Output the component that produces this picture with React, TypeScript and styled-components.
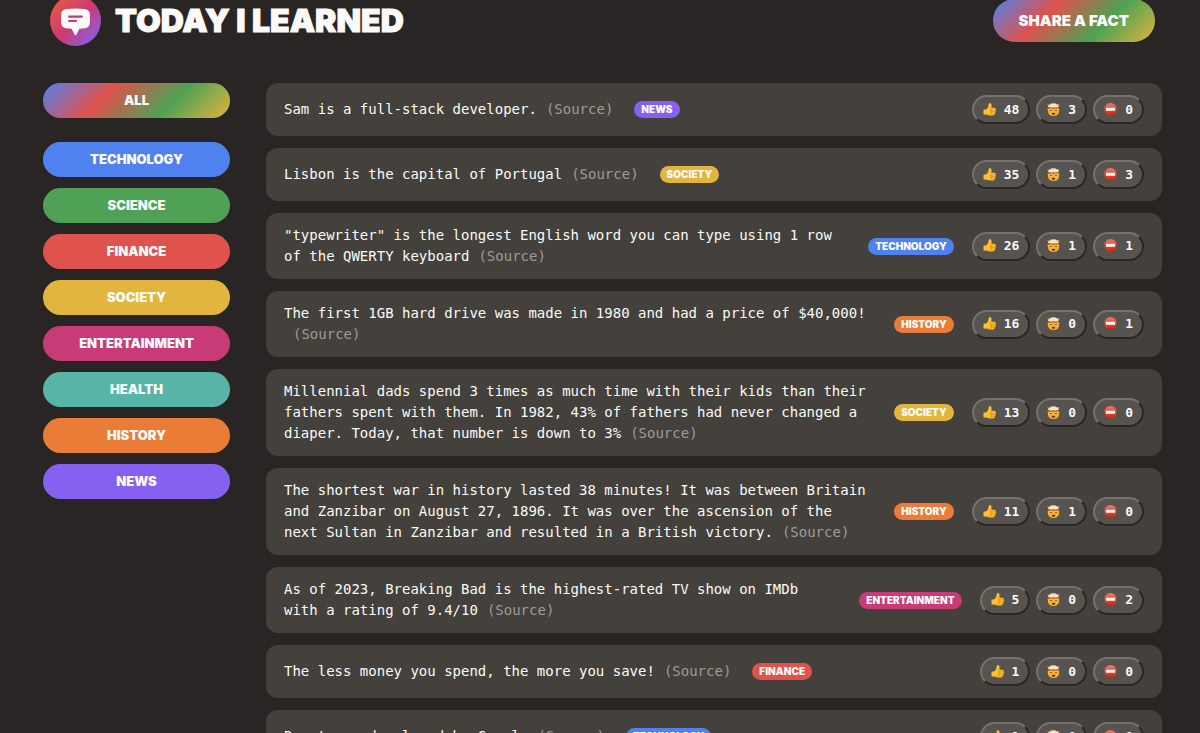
import React from "react";
import styled, { createGlobalStyle } from "styled-components";

const display = `Inter, "Liberation Sans", sans-serif`;
const mono = `"DejaVu Sans Mono", "Liberation Mono", monospace`;

const colors = {
  page: "#292524",
  card: "#44403b",
  vote: "#57534e",
  text: "#fafaf9",
  muted: "#a09b96",
};

const categoryColors = {
  technology: "#4f81ef",
  science: "#4ea155",
  finance: "#df524d",
  society: "#e2b53e",
  entertainment: "#c93b76",
  health: "#57b5a8",
  history: "#e97c37",
  news: "#8660f0",
};

type Category = keyof typeof categoryColors;

const rainbow = "linear-gradient(135deg, #4f81ef, #df524d, #4ea155, #e2b53e)";

const GlobalStyle = createGlobalStyle`
  *, *::before, *::after { box-sizing: border-box; margin: 0; padding: 0; }
  body { background: ${colors.page}; color: ${colors.text}; font-family: ${mono}; }
  button { cursor: pointer; }
`;

const Page = styled.div`
  display: flex;
  flex-direction: column;
  gap: 37px;
  height: 100vh;
  overflow: hidden;
  padding: 0 38px 0 43px;
`;

const Header = styled.header`
  display: flex;
  align-items: center;
  justify-content: space-between;
  flex-shrink: 0;
  margin-top: -5px;
  padding: 0 7px;
`;

const Brand = styled.div`
  display: flex;
  align-items: center;
  gap: 14px;
`;

const LogoIcon = styled.svg`
  display: block;
  width: 51px;
  height: 51px;
`;

const Title = styled.h1`
  font-family: ${display};
  font-size: 32px;
  font-weight: 900;
  line-height: 32px;
  text-transform: uppercase;
  -webkit-text-stroke: 1px currentColor;
`;

const PillButton = styled.button`
  border: none;
  border-radius: 100px;
  color: ${colors.text};
  font-family: ${display};
  font-weight: 900;
  text-transform: uppercase;
`;

const ShareButton = styled(PillButton)`
  height: 43px;
  padding: 0 26px;
  background: ${rainbow};
  font-size: 15px;
  line-height: 20px;
`;

const Main = styled.main`
  display: grid;
  grid-template-columns: 187px minmax(0, 1fr);
  gap: 36px;
  min-height: 0;
`;

const Categories = styled.ul`
  display: flex;
  flex-direction: column;
  gap: 11px;
  list-style: none;
`;

const CategoryItem = styled.li<{ $spaced?: boolean }>`
  margin-bottom: ${(p) => (p.$spaced ? 13 : 0)}px;
`;

const CategoryButton = styled(PillButton)<{ $fill: string }>`
  display: block;
  width: 100%;
  height: 35px;
  padding-bottom: 2px;
  background: ${(p) => p.$fill};
  font-size: 13px;
  line-height: 20px;
`;

const Facts = styled.ul`
  display: flex;
  flex-direction: column;
  gap: 12px;
  min-height: 0;
  list-style: none;
`;

const Fact = styled.li`
  display: flex;
  align-items: center;
  flex-shrink: 0;
  gap: 18px;
  padding: 12px 18px;
  border-radius: 12px;
  background: ${colors.card};
`;

const FactText = styled.p`
  padding-right: 3px;
  font-size: 14px;
  line-height: 21px;
`;

const Source = styled.a`
  margin-left: 9px;
  color: ${colors.muted};
  text-decoration: none;
`;

const Tag = styled.span<{ $category: Category }>`
  flex-shrink: 0;
  padding: 0 7px;
  border-radius: 100px;
  background: ${(p) => categoryColors[p.$category]};
  font-family: ${display};
  font-size: 10px;
  font-weight: 900;
  line-height: 17px;
  text-transform: uppercase;
`;

const Votes = styled.div`
  display: flex;
  flex-shrink: 0;
  gap: 6px;
  margin-left: auto;
`;

const VoteButton = styled.button`
  display: flex;
  align-items: center;
  gap: 8px;
  height: 29px;
  padding: 0 9px;
  border: 2px solid;
  border-color: #75716d #2b2726 #2b2726 #75716d;
  border-radius: 100px;
  background: ${colors.vote};
  color: ${colors.text};
  font-family: ${mono};
  font-size: 13px;
  font-weight: 700;
  line-height: 20px;
`;

const Emoji = styled.svg`
  display: block;
  width: 13px;
  height: 14px;
`;

const Logo = () => (
  <LogoIcon viewBox="0 0 52 52" role="img" aria-label="Today I Learned logo">
    <defs>
      <linearGradient id="logo-fill" x1="0.15" y1="0.15" x2="0.9" y2="0.9">
        <stop offset="0" stopColor="#e2554a" />
        <stop offset="0.5" stopColor="#c93b76" />
        <stop offset="1" stopColor="#8660f0" />
      </linearGradient>
    </defs>
    <circle cx="26" cy="26" r="26" fill="url(#logo-fill)" />
    <path
      fill="#fafaf9"
      d="M17 14.3Q26 13.2 35 14.3Q40.3 14.8 40.6 19.5Q41 24 40.6 28.5Q40.2 33.500 35.5 34L30 34.500L26.8 40.500Q26 42 25.200 40.500L22 34.500L16.500 34Q11.800 33.500 11.400 28.500Q11 24 11.400 19.500Q11.700 14.800 17 14.300Z"
    />
    <path d="M19.500 22H32.500M19.500 26.500H26.500" stroke="#c93b76" strokeWidth="2.200" strokeLinecap="round" />
  </LogoIcon>
);

const ThumbsUp = () => (
  <Emoji viewBox="0 0 26 28" role="img" aria-label="Interesting">
    <path fill="#fdbf2d" d="M1 13.500Q4 13 7 12.500Q11.500 8 11.500 2Q12.500 -0.500 15 0.500Q18.500 2 16.500 9.500H23Q25.500 10 25.300 12.500Q26.500 14.500 25 16.500Q25.800 19 24 20.500Q24.300 23.500 21.500 24.300Q15 26.500 9 23.500L1 23Z" />
    <path fill="none" stroke="#dc8417" strokeWidth="1.300" strokeLinecap="round" d="M16 13.500H24.500M16.500 17H24.500M16.500 20.500H23.500M15 11.500Q17.500 13 15.500 17Q17.500 20 16 23.500" />
  </Emoji>
);

const MindBlown = () => (
  <Emoji viewBox="0 0 26 28" role="img" aria-label="Mind-blowing">
    <path fill="#f7ad26" d="M1.500 10H24.500V14Q24.500 26 13 26Q1.500 26 1.500 14Z" />
    <path fill="#a4532a" d="M2 8L5 7H21L24 8V11.500L20.500 10L18 12L15 10L12 12L9 10L6 12L2 10.500Z" />
    <path fill="#f3e2cc" d="M5 8.500Q1 8 2.500 5Q3.500 2.500 6.500 3Q9 -0.500 12.500 1Q16 -1 19 2.500Q22.500 2 23.500 5Q24 8 21 8.500Q17 9.500 13 8.500Q9 9.500 5 8.500Z" />
    <path fill="#f08b2a" d="M0 2L4 3L2 5ZM26 2L22 3L24 5Z" />
    <circle cx="8" cy="15" r="2.300" fill="#fbe9c8" />
    <circle cx="18" cy="15" r="2.300" fill="#fbe9c8" />
    <circle cx="8" cy="15" r="1.600" fill="#58300f" />
    <circle cx="18" cy="15" r="1.600" fill="#58300f" />
    <ellipse cx="13" cy="21.500" rx="3.500" ry="2.200" fill="#6c3410" />
  </Emoji>
);

const NoEntry = () => (
  <Emoji viewBox="0 0 26 28" role="img" aria-label="False">
    <defs>
      <linearGradient id="no-entry-fill" x1="0" y1="0" x2="0" y2="1">
        <stop offset="0" stopColor="#f27a66" />
        <stop offset="0.500" stopColor="#e24a35" />
        <stop offset="1" stopColor="#d92408" />
      </linearGradient>
    </defs>
    <circle cx="13" cy="12.500" r="12.500" fill="url(#no-entry-fill)" />
    <rect x="4" y="9.500" width="18" height="6" rx="1" fill="#fff" />
  </Emoji>
);

interface FactData {
  text: string;
  category: Category;
  votes: [number, number, number];
}

const facts: FactData[] = [
  { text: "Sam is a full-stack developer.", category: "news", votes: [48, 3, 0] },
  { text: "Lisbon is the capital of Portugal", category: "society", votes: [35, 1, 3] },
  {
    text: '"typewriter" is the longest English word you can type using 1 row of the QWERTY keyboard',
    category: "technology",
    votes: [26, 1, 1],
  },
  {
    text: "The first 1GB hard drive was made in 1980 and had a price of $40,000!",
    category: "history",
    votes: [16, 0, 1],
  },
  {
    text: "Millennial dads spend 3 times as much time with their kids than their fathers spent with them. In 1982, 43% of fathers had never changed a diaper. Today, that number is down to 3%",
    category: "society",
    votes: [13, 0, 0],
  },
  {
    text: "The shortest war in history lasted 38 minutes! It was between Britain and Zanzibar on August 27, 1896. It was over the ascension of the next Sultan in Zanzibar and resulted in a British victory.",
    category: "history",
    votes: [11, 1, 0],
  },
  {
    text: "As of 2023, Breaking Bad is the highest-rated TV show on IMDb with a rating of 9.4/10",
    category: "entertainment",
    votes: [5, 0, 2],
  },
  { text: "The less money you spend, the more you save!", category: "finance", votes: [1, 0, 0] },
  { text: "React was developed by Google", category: "technology", votes: [1, 0, 0] },
];

export default function App() {
  return (
    <>
      <GlobalStyle />
      <Page>
        <Header>
          <Brand>
            <Logo />
            <Title>Today I Learned</Title>
          </Brand>
          <ShareButton type="button">Share a fact</ShareButton>
        </Header>
        <Main>
          <aside>
            <Categories>
              <CategoryItem $spaced>
                <CategoryButton type="button" $fill={rainbow}>All</CategoryButton>
              </CategoryItem>
              {(Object.keys(categoryColors) as Category[]).map((name) => (
                <CategoryItem key={name}>
                  <CategoryButton type="button" $fill={categoryColors[name]}>{name}</CategoryButton>
                </CategoryItem>
              ))}
            </Categories>
          </aside>
          <Facts>
            {facts.map((fact) => (
              <Fact key={fact.text}>
                <FactText>
                  {fact.text}
                  <wbr />
                  <Source href="#source">(Source)</Source>
                </FactText>
                <Tag $category={fact.category}>{fact.category}</Tag>
                <Votes>
                  <VoteButton type="button"><ThumbsUp />{fact.votes[0]}</VoteButton>
                  <VoteButton type="button"><MindBlown />{fact.votes[1]}</VoteButton>
                  <VoteButton type="button"><NoEntry />{fact.votes[2]}</VoteButton>
                </Votes>
              </Fact>
            ))}
          </Facts>
        </Main>
      </Page>
    </>
  );
}
